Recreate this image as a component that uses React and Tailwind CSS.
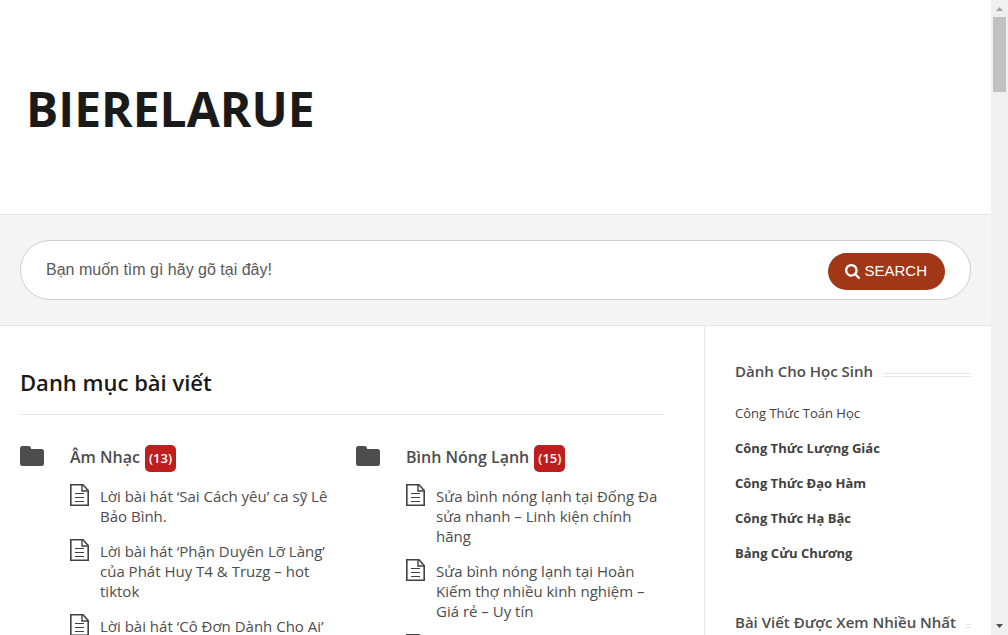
/**
 * Knowledge base home page
 * - site title
 * - article search
 * - categories with their latest articles
 * - sidebar widgets
 */

const CATEGORIES = [
  {
    name: 'Âm Nhạc',
    count: 13,
    articles: [
      'Lời bài hát ‘Sai Cách yêu’ ca sỹ Lê Bảo Bình.',
      'Lời bài hát ‘Phận Duyên Lỡ Làng’ của Phát Huy T4 & Truzg – hot tiktok',
      'Lời bài hát ‘Cô Đơn Dành Cho Ai’',
    ],
  },
  {
    name: 'Bình Nóng Lạnh',
    count: 15,
    articles: [
      'Sửa bình nóng lạnh tại Đống Đa sửa nhanh – Linh kiện chính hãng',
      'Sửa bình nóng lạnh tại Hoàn Kiếm thợ nhiều kinh nghiệm – Giá rẻ – Uy tín',
      '',
    ],
  },
]

const FORMULAS = [
  { label: 'Công Thức Toán Học', bold: false },
  { label: 'Công Thức Lượng Giác', bold: true },
  { label: 'Công Thức Đạo Hàm', bold: true },
  { label: 'Công Thức Hạ Bậc', bold: true },
  { label: 'Bảng Cửu Chương', bold: true },
]

function FolderIcon() {
  return (
    <svg viewBox="0 0 24 20" className="h-5 w-6 shrink-0 fill-[#4d4d4d]" aria-hidden="true">
      <path d="M2.500 0h6a2.500 2.500 0 0 1 2.500 2.500V3h10.500A2.500 2.500 0 0 1 24 5.500v12a2.500 2.500 0 0 1-2.500 2.500h-19A2.500 2.500 0 0 1 0 17.500v-15A2.500 2.500 0 0 1 2.500 0z" />
    </svg>
  )
}

function DocumentIcon() {
  return (
    <svg viewBox="0 0 19 22" className="h-[22px] w-[19px] shrink-0" fill="none" stroke="#404040" aria-hidden="true">
      <path d="M.8.8h12.200L18.200 6.500v14.700H.8z" strokeWidth="1.6" />
      <path d="M12 1v6h6" strokeWidth="1.4" />
      <path d="M5 9.500h9M5 13.500h9M5 17.500h9" strokeWidth="1.2" />
    </svg>
  )
}

function SearchIcon() {
  return (
    <svg viewBox="0 128 1664 1664" className="size-[15px] fill-white" aria-hidden="true">
      <path d="M1152 832q0-185-131.500-316.500T704 384 387.500 515.500 256 832t131.500 316.500T704 1280t316.500-131.500T1152 832zm512 832q0 52-38 90t-90 38q-54 0-90-38l-343-342q-179 124-399 124-143 0-273.500-55.500t-225-150-150-225T0 832t55.500-273.500 150-225 225-150T704 128t273.500 55.500 225 150 150 225T1408 832q0 220-124 399l343 343q37 37 37 90z" />
    </svg>
  )
}

function Category({ name, count, articles }) {
  return (
    <section className="flex gap-[26px]">
      <div className="pt-px">
        <FolderIcon />
      </div>
      <div className="min-w-0 flex-1">
        <h3 className="flex items-start gap-[5px] text-base leading-6 font-semibold text-[#4d4d4d]">
          <a href="#category">{name}</a>
          <span className="rounded-[5px] bg-[#be1e1e] px-1 text-[13px] leading-[27px] font-semibold text-white">
            ({count})
          </span>
        </h3>
        <ul className="mt-3 space-y-[13px]">
          {articles.map((title) => (
            <li key={title} className="flex gap-[11px]">
              <DocumentIcon />
              <a href="#article" className="pt-[2px] text-[15px] leading-5 text-[#4d4d4d]">
                {title}
              </a>
            </li>
          ))}
        </ul>
      </div>
    </section>
  )
}

function WidgetTitle({ children }) {
  return (
    <div className="flex items-center gap-[10px]">
      <h4 className="shrink-0 text-[15px] leading-5 font-semibold text-[#4d4d4d]">{children}</h4>
      <span className="mt-2 h-1 flex-1 border-y border-[#e5e5e5]" />
    </div>
  )
}

function Scrollbar() {
  return (
    <div className="flex w-[17px] shrink-0 flex-col items-center bg-[#f0f0f0]" aria-hidden="true">
      <svg viewBox="0 0 17 17" className="size-[17px] fill-[#a3a3a3]">
        <path d="M5 11h7L8.500 7z" />
      </svg>
      <div className="h-[75px] w-[13px] bg-[#c1c1c1]" />
      <svg viewBox="0 0 17 17" className="mt-auto size-[17px] fill-[#505050]">
        <path d="M5 6h7L8.500 10z" />
      </svg>
    </div>
  )
}

export default function App() {
  return (
    <div className="flex h-screen overflow-hidden bg-white font-['Open_Sans','Noto_Sans',sans-serif]">
      <div className="min-w-0 flex-1 overflow-hidden">
        <header className="border-b border-[#e5e5e5] px-[26px] pt-[75px] pb-[71px]">
          <h1 className="text-5xl leading-[68px] font-bold text-[#1a1a1a]">
            <a href="#home">BIERELARUE</a>
          </h1>
        </header>

        <div className="border-b border-[#e5e5e5] bg-[#f4f4f4] px-5 py-[25px]">
          <form
            role="search"
            className="flex h-[60px] items-center rounded-full border border-[#cfcfcf] bg-white px-[25px] font-['Liberation_Sans',Arial,sans-serif]"
            onSubmit={(e) => e.preventDefault()}
          >
            <input
              type="text"
              aria-label="Bạn muốn tìm gì hãy gõ tại đây!"
              placeholder="Bạn muốn tìm gì hãy gõ tại đây!"
              className="min-w-0 flex-1 text-base text-[#595959] outline-none placeholder:text-[#595959]"
            />
            <button
              type="submit"
              className="mt-[3px] flex h-[37px] items-center gap-1 rounded-full bg-[#a03717] pr-[18px] pl-[17px] text-[15px] text-white"
            >
              <SearchIcon />
              SEARCH
            </button>
          </form>
        </div>

        <div className="flex">
          <main className="min-w-0 flex-1 pt-10 pr-10 pl-5">
            <h2 className="border-b border-[#e5e5e5] pb-[15px] text-[22px] leading-[33px] font-semibold text-[#1a1a1a]">
              Danh mục bài viết
            </h2>
            <div className="grid grid-cols-2 gap-7 pt-[30px]">
              {CATEGORIES.map((category) => (
                <Category key={category.name} {...category} />
              ))}
            </div>
          </main>

          <aside className="w-[287px] shrink-0 border-l border-[#e5e5e5] pt-[35px] pr-5 pl-[30px]">
            <WidgetTitle>Dành Cho Học Sinh</WidgetTitle>
            <ul className="mt-[22px] mb-[49px] space-y-[15px] text-[13px] leading-5 text-[#404040]">
              {FORMULAS.map(({ label, bold }) => (
                <li key={label}>
                  <a href="#formula" className={bold ? 'font-bold' : ''}>
                    {label}
                  </a>
                </li>
              ))}
            </ul>
            <WidgetTitle>Bài Viết Được Xem Nhiều Nhất</WidgetTitle>
          </aside>
        </div>
      </div>
      <Scrollbar />
    </div>
  )
}
